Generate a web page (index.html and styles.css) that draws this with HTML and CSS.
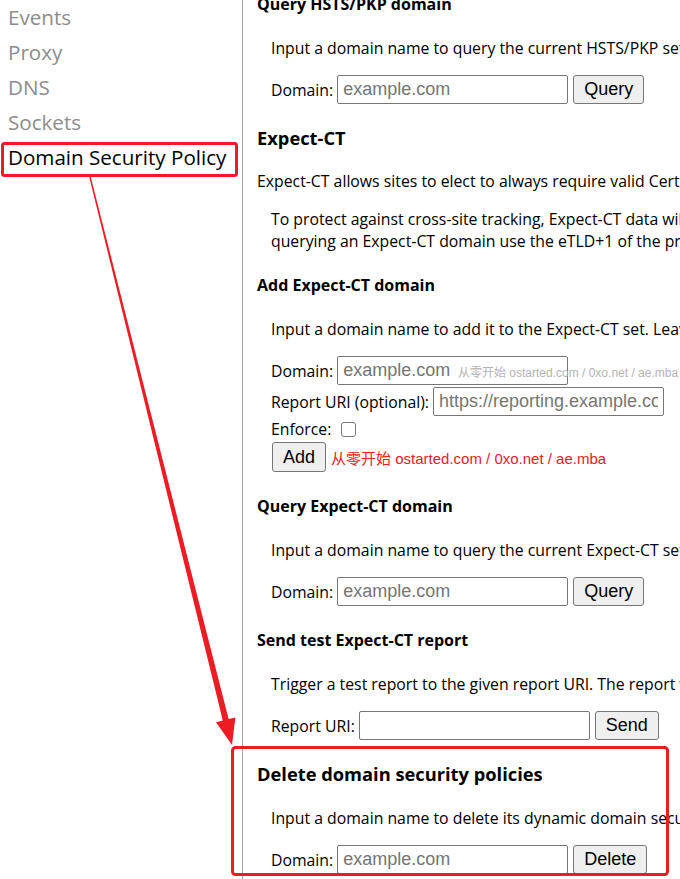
FILE: index.html
```html
<!DOCTYPE html>
<html lang="en">
<head>
<meta charset="utf-8">
<title>net-internals</title>
<link rel="stylesheet" href="styles.css">
</head>
<body>
<div class="page">
  <nav class="sidebar">
    <ul class="tabs">
      <li class="tab">Events</li>
      <li class="tab">Proxy</li>
      <li class="tab">DNS</li>
      <li class="tab">Sockets</li>
      <li class="tab selected">Domain Security Policy</li>
    </ul>
  </nav>

  <main class="content">
    <section class="block">
      <h3>Query HSTS/PKP domain</h3>
      <div class="indent">
        <p>Input a domain name to query the current HSTS/PKP set for it:</p>
        <form class="row">
          <label for="hsts-query">Domain:</label>
          <input id="hsts-query" type="text" placeholder="example.com">
          <button type="button">Query</button>
        </form>
      </div>
    </section>

    <section class="block">
      <h2>Expect-CT</h2>
      <p>Expect-CT allows sites to elect to always require valid Certificate Transparency information.</p>
      <div class="indent">
        <p>To protect against cross-site tracking, Expect-CT data will be keyed by the top-level site. Adding, deleting or<br>querying an Expect-CT domain use the eTLD+1 of the provided origin as the key.</p>
      </div>
    </section>

    <section class="block">
      <h3>Add Expect-CT domain</h3>
      <div class="indent">
        <p>Input a domain name to add it to the Expect-CT set. Leave report URI blank to send no reports.</p>
        <form class="stack">
          <div class="row tight">
            <label for="ct-add">Domain:</label>
            <input id="ct-add" type="text" placeholder="example.com">
            <span class="mark">从零开始 ostarted.com / 0xo.net / ae.mba</span>
          </div>
          <div class="row">
            <label for="ct-report">Report URI (optional):</label>
            <input id="ct-report" type="text" placeholder="https://reporting.example.com/expect-ct">
          </div>
          <div class="row check">
            <label for="ct-enforce">Enforce:</label>
            <input id="ct-enforce" type="checkbox" class="box">
          </div>
          <div class="row submit">
            <button type="button">Add</button>
            <span class="stamp">从零开始 ostarted.com / 0xo.net / ae.mba</span>
          </div>
        </form>
      </div>
    </section>

    <section class="block spaced">
      <h3>Query Expect-CT domain</h3>
      <div class="indent">
        <p>Input a domain name to query the current Expect-CT set for this domain.</p>
        <form class="row">
          <label for="ct-query">Domain:</label>
          <input id="ct-query" type="text" placeholder="example.com">
          <button type="button">Query</button>
        </form>
      </div>
    </section>

    <section class="block spaced">
      <h3>Send test Expect-CT report</h3>
      <div class="indent">
        <p>Trigger a test report to the given report URI. The report will contain a fake certificate chain.</p>
        <form class="row">
          <label for="ct-test">Report URI:</label>
          <input id="ct-test" type="text">
          <button type="button">Send</button>
        </form>
      </div>
    </section>

    <section class="block">
      <h2 class="wide">Delete domain security policies</h2>
      <div class="indent">
        <p>Input a domain name to delete its dynamic domain security policies (HSTS and Expect-CT).</p>
        <form class="row">
          <label for="dsp-delete">Domain:</label>
          <input id="dsp-delete" type="text" placeholder="example.com">
          <button type="button">Delete</button>
        </form>
      </div>
    </section>
  </main>

  <svg class="callout" width="680" height="879" viewBox="0 0 680 879" aria-hidden="true">
    <rect x="2.5" y="143.5" width="234" height="32" rx="2" fill="none" stroke="#ec1c24" stroke-width="3"/>
    <polygon fill="#ec1c24" points="89.3,177.2 90.7,176.8 228.6,719.1 235.4,717.4 232,745 216,722.2 222.8,720.5"/>
    <rect x="232.5" y="747.5" width="435" height="127" rx="3" fill="none" stroke="#ec1c24" stroke-width="3"/>
  </svg>
</div>
</body>
</html>
```

FILE: styles.css
```css
html, body {
  margin: 0;
  height: 100%;
  overflow: hidden;
  background: #fff;
}

body {
  font-family: "Open Sans", "Noto Sans", sans-serif;
  font-size: 15.8px;
  color: #000;
}

.page {
  position: relative;
  display: flex;
  height: 879px;
  overflow: hidden;
}

/* left tab list */
.sidebar {
  flex: none;
  width: 242px;
  border-right: 1px solid #a3a3a3;
}

.tabs {
  list-style: none;
  margin: 0;
  padding: 0;
}

.tab {
  height: 35px;
  line-height: 35px;
  padding-left: 8px;
  font-size: 20.6px;
  color: #8c8c8c;
  white-space: nowrap;
}

.tab.selected {
  color: #000;
}

/* main panel, scrolled part-way down */
.content {
  flex: none;
  width: 1100px;
  padding-left: 14px;
  margin-top: -7px;
  white-space: nowrap;
}

.block + .block {
  margin-top: 22px;
}

.block + .block.spaced {
  margin-top: 23px;
}

h2, h3 {
  margin: 0;
  font-weight: 700;
}

h2 {
  font-size: 18.3px;
  line-height: 24px;
  margin-bottom: 20px;
}

h2.wide {
  margin-bottom: 21px;
}

h3 {
  font-size: 16px;
  line-height: 22px;
  margin-bottom: 22px;
}

p {
  margin: 0 0 16px;
  line-height: 22px;
}

.indent {
  margin-left: 14px;
}

/* form rows */
.row {
  position: relative;
  display: flex;
  align-items: center;
  gap: 4px;
  height: 29px;
}

.row.tight {
  margin-bottom: 2px;
}

.row.check {
  height: 26px;
  gap: 10px;
}

.row.submit {
  height: 30px;
}

input[type="text"] {
  box-sizing: border-box;
  width: 231px;
  height: 29px;
  margin: 0;
  padding: 0 5px;
  border: 1px solid #767676;
  border-radius: 2px;
  font-family: "Liberation Sans", Arial, sans-serif;
  font-size: 18px;
  color: #000;
  background: #fff;
}

input::placeholder {
  color: #757575;
}

button {
  box-sizing: border-box;
  height: 29px;
  margin: 0 0 0 1px;
  padding: 0 10px;
  border: 1px solid #767676;
  border-radius: 3px;
  background: #efefef;
  font-family: "Liberation Sans", Arial, sans-serif;
  font-size: 18px;
  color: #000;
}

.row.submit button {
  height: 30px;
}

.box {
  appearance: none;
  box-sizing: border-box;
  width: 15px;
  height: 15px;
  margin: 0;
  border: 1px solid #767676;
  border-radius: 3px;
  background: #fff;
}

/* site stamps */
.mark {
  position: absolute;
  left: 187px;
  top: 50%;
  transform: translateY(-50%);
  font-family: "Liberation Sans", "Noto Sans CJK SC", sans-serif;
  font-size: 12px;
  color: #b3b3b3;
}

.stamp {
  margin-left: 1px;
  font-family: "Liberation Sans", "Noto Sans CJK SC", sans-serif;
  font-size: 15px;
  color: #ea2027;
}

.callout {
  position: absolute;
  top: 0;
  left: 0;
  pointer-events: none;
}
```
